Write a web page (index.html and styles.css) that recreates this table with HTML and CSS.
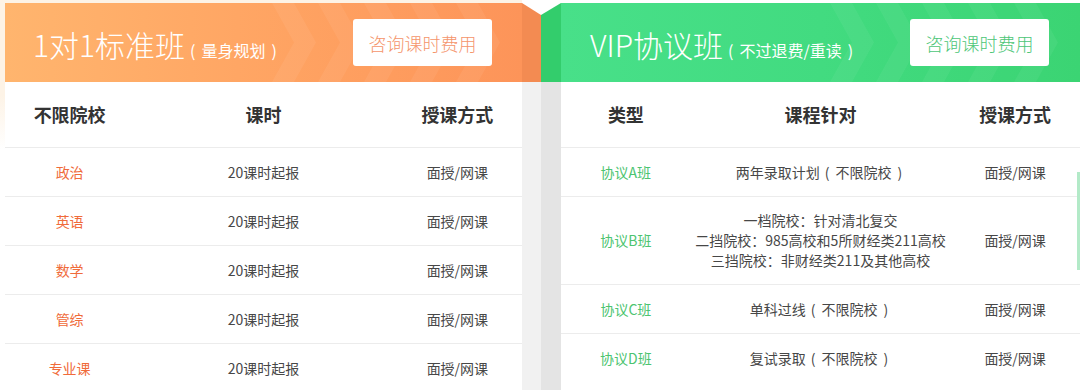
FILE: index.html
```html
<!DOCTYPE html>
<html lang="zh-CN">
<head>
<meta charset="utf-8">
<title>课程</title>
<link rel="stylesheet" href="styles.css">
</head>
<body>
<div class="page">
  <div class="left-wrap">
    <section class="panel">
      <header class="banner banner-orange">
        <svg class="chev" width="260" height="79" viewBox="0 0 260 79" aria-hidden="true">
          <g fill="#ffffff" fill-opacity="0.06">
            <polygon points="0,0 22,0 44,39.5 22,79 0,79 22,39.5"/>
            <polygon points="46,0 68,0 90,39.5 68,79 46,79 68,39.5"/>
            <polygon points="92,0 114,0 136,39.5 114,79 92,79 114,39.5"/>
            <polygon points="138,0 160,0 182,39.5 160,79 138,79 160,39.5"/>
            <polygon points="184,0 206,0 228,39.5 206,79 184,79 206,39.5"/>
          </g>
        </svg>
        <h2 class="title">1对1标准班<small class="sub"><span class="par">(</span>量身规划<span class="par">)</span></small></h2>
        <a class="btn btn-orange">咨询课时费用</a>
      </header>
      <table class="grid">
        <colgroup><col class="c1"><col class="c2"><col class="c3"></colgroup>
        <thead>
          <tr><th>不限院校</th><th>课时</th><th>授课方式</th></tr>
        </thead>
        <tbody class="orange">
          <tr><td class="name">政治</td><td>20课时起报</td><td>面授/网课</td></tr>
          <tr><td class="name">英语</td><td>20课时起报</td><td>面授/网课</td></tr>
          <tr><td class="name">数学</td><td>20课时起报</td><td>面授/网课</td></tr>
          <tr><td class="name">管综</td><td>20课时起报</td><td>面授/网课</td></tr>
          <tr><td class="name">专业课</td><td>20课时起报</td><td>面授/网课</td></tr>
        </tbody>
      </table>
    </section>
  </div>

  <div class="fold">
    <svg class="fold-top" width="39" height="82" viewBox="0 0 39 82" aria-hidden="true">
      <rect x="0" y="0" width="39" height="82" fill="#ffffff"/>
      <polygon points="0,3 19,15 19,82 0,82" fill="#f38b52"/>
      <polygon points="19,15 39,3 39,82 19,82" fill="#33cd6c"/>
    </svg>
  </div>

  <section class="panel panel-right">
    <header class="banner banner-green">
      <svg class="chev" width="260" height="79" viewBox="0 0 260 79" aria-hidden="true">
        <g fill="#ffffff" fill-opacity="0.05">
          <polygon points="0,0 22,0 44,39.5 22,79 0,79 22,39.5"/>
          <polygon points="46,0 68,0 90,39.5 68,79 46,79 68,39.5"/>
          <polygon points="92,0 114,0 136,39.5 114,79 92,79 114,39.5"/>
          <polygon points="138,0 160,0 182,39.5 160,79 138,79 160,39.5"/>
          <polygon points="184,0 206,0 228,39.5 206,79 184,79 206,39.5"/>
        </g>
      </svg>
      <h2 class="title">VIP协议班<small class="sub"><span class="par">(</span>不过退费/重读<span class="par">)</span></small></h2>
      <a class="btn btn-green">咨询课时费用</a>
    </header>
    <table class="grid">
      <colgroup><col class="c1"><col class="c2"><col class="c3"></colgroup>
      <thead>
        <tr><th>类型</th><th>课程针对</th><th>授课方式</th></tr>
      </thead>
      <tbody class="green">
        <tr><td class="name">协议A班</td><td>两年录取计划<span class="par">(</span>不限院校<span class="par">)</span></td><td>面授/网课</td></tr>
        <tr class="tall"><td class="name">协议B班</td><td>一档院校：针对清北复交<br>二挡院校：985高校和5所财经类211高校<br>三挡院校：非财经类211及其他高校</td><td>面授/网课</td></tr>
        <tr><td class="name">协议C班</td><td>单科过线<span class="par">(</span>不限院校<span class="par">)</span></td><td>面授/网课</td></tr>
        <tr class="last"><td class="name">协议D班</td><td>复试录取<span class="par">(</span>不限院校<span class="par">)</span></td><td>面授/网课</td></tr>
      </tbody>
    </table>
    <span class="side-bar" aria-hidden="true"></span>
  </section>
</div>
</body>
</html>
```

FILE: styles.css
```css
* { box-sizing: border-box; }

html, body {
  margin: 0;
  padding: 0;
  background: #ffffff;
}

body {
  font-family: "Noto Sans CJK SC", "Noto Sans", sans-serif;
  color: #444444;
}

.page {
  display: flex;
  width: 1080px;
  height: 390px;
  overflow: hidden;
}

.left-wrap {
  width: 522px;
  padding: 3px 0 0 5px;
  background: linear-gradient(to bottom, #fdf3e6 0, #fdf3e6 95px, #ffffff 150px);
}

.panel {
  position: relative;
  background: #ffffff;
}

.panel-right {
  width: 519px;
  margin-top: 3px;
}

.banner {
  position: relative;
  height: 79px;
  display: flex;
  align-items: center;
  justify-content: space-between;
  padding: 0 30px 0 28px;
  overflow: hidden;
}

.banner-orange {
  background: linear-gradient(to right, #ffb56e 0%, #ffa664 45%, #fd9459 100%);
}

.banner-green {
  padding-left: 29px;
  padding-right: 31px;
  background: linear-gradient(to right, #48e089 0%, #42db80 50%, #3bd473 100%);
}

.chev {
  position: absolute;
  right: -10px;
  top: 0;
}

.title {
  position: relative;
  margin: 0 0 -2px;
  color: #ffffff;
  font-size: 30px;
  font-weight: 300;
  line-height: 1;
  display: flex;
  align-items: baseline;
}

.sub {
  font-size: 16px;
  font-weight: 400;
  display: flex;
  align-items: baseline;
}

.par {
  display: inline-block;
  margin: 0 6px 0 5px;
}

.sub .par:last-child,
td .par:last-child {
  margin: 0 3px 0 6px;
}

.btn {
  position: relative;
  display: flex;
  align-items: center;
  justify-content: center;
  width: 139px;
  height: 47px;
  background: #ffffff;
  border-radius: 3px;
  font-size: 18px;
  font-weight: 300;
  text-decoration: none;
}

.btn-orange { color: #f5956b; }
.btn-green { color: #4cc677; }

.fold {
  width: 39px;
  flex: none;
  background: linear-gradient(to right, #f1f1f1 0, #f1f1f1 19px, #e4e4e4 19px, #e4e4e4 39px);
}

.fold-top { display: block; }

.grid {
  width: 100%;
  border-collapse: collapse;
  table-layout: fixed;
}

.c1 { width: 25%; }
.c2 { width: 50%; }
.c3 { width: 25%; }

.grid th {
  height: 65px;
  font-size: 18px;
  font-weight: 700;
  color: #333333;
  text-align: center;
  border-bottom: 1px solid #ececec;
  padding: 0;
}

.grid td {
  height: 49px;
  font-size: 14px;
  line-height: 20px;
  text-align: center;
  color: #474747;
  border-bottom: 1px solid #ececec;
  padding: 0;
}

.grid tr.tall td { height: 88px; }
.grid tr.last td { border-bottom: 0; }

.orange .name { color: #f06b3a; }
.green .name { color: #4cc470; }

.side-bar {
  position: absolute;
  right: 0;
  top: 169px;
  width: 3px;
  height: 98px;
  background: #b3eac8;
}
```
